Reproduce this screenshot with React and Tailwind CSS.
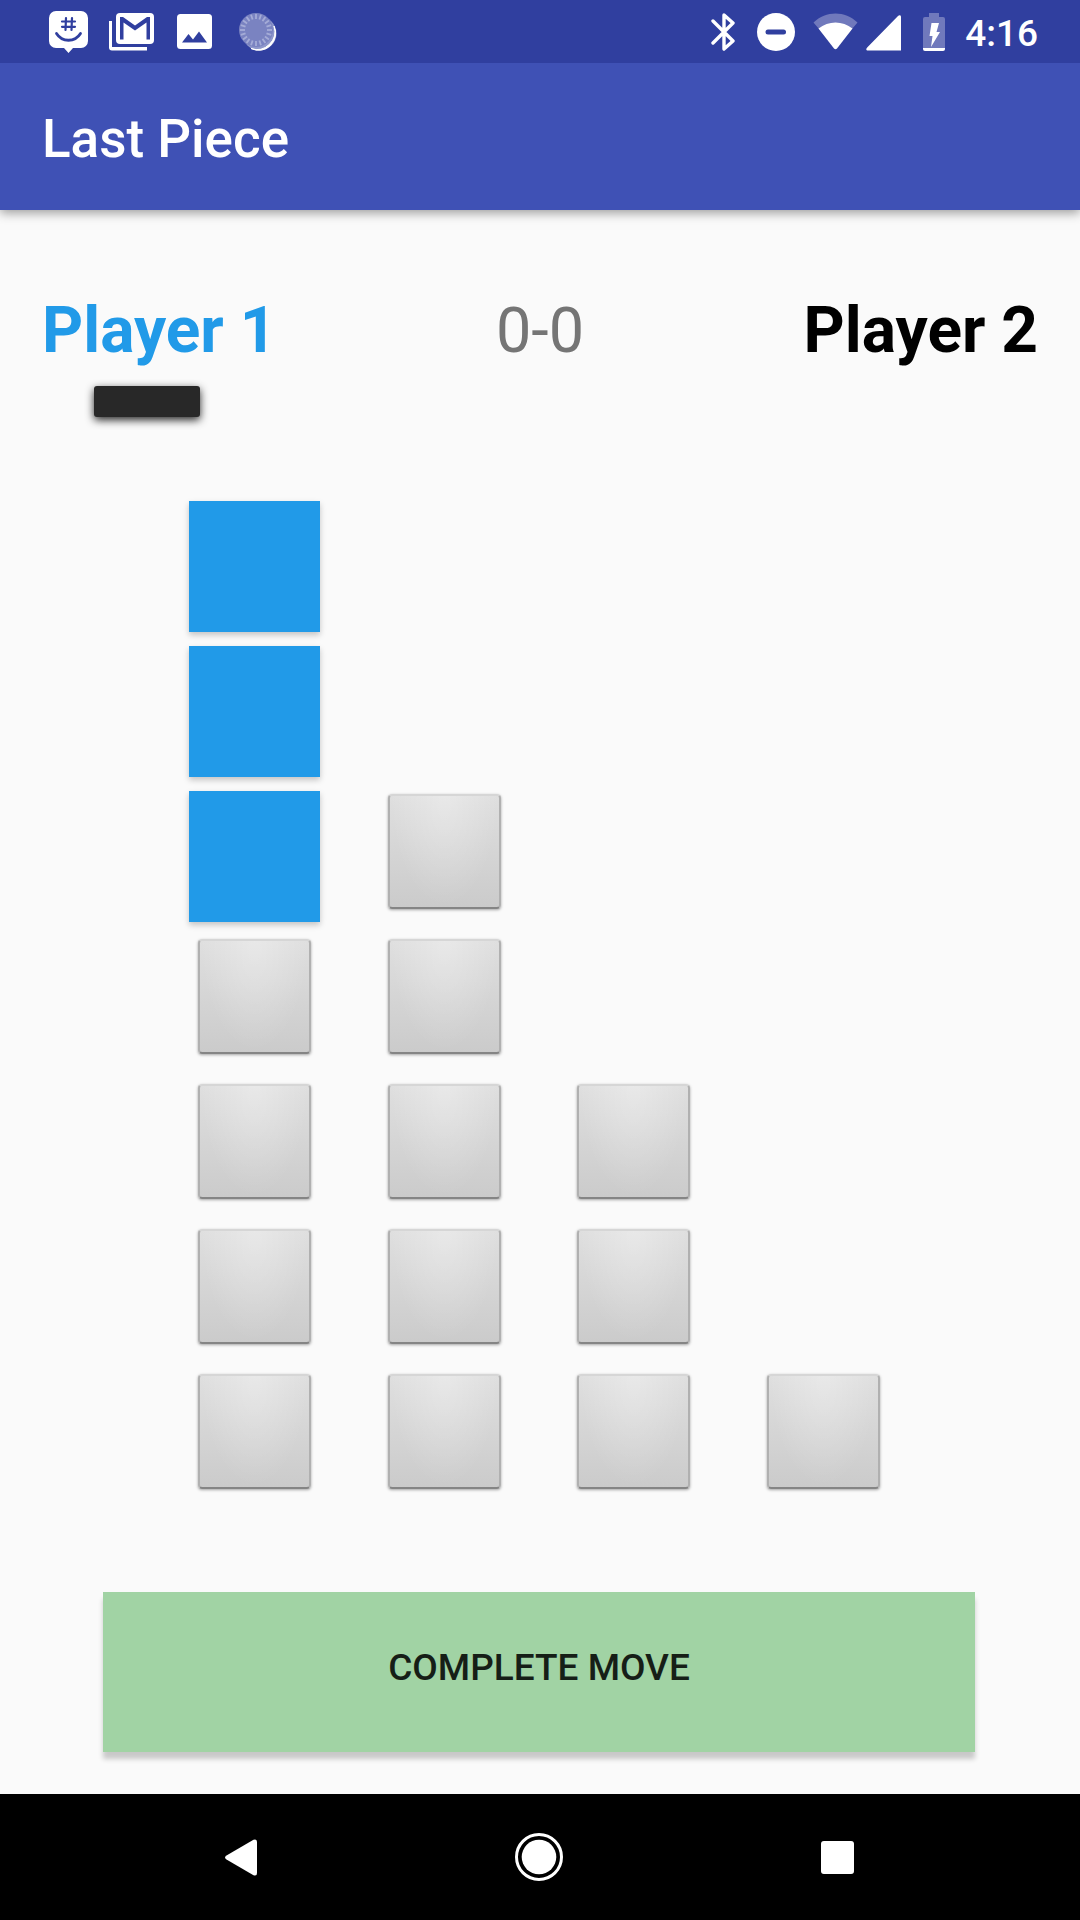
import React, { useState } from "react";

const ROWS = 7;
const COLUMN_HEIGHTS = [7, 5, 3, 1];

function GroupMeIcon() {
  return (
    <svg viewBox="0 0 39 42" className="h-[42px] w-[39px]" aria-hidden="true">
      <path fill="#fff" d="M7 0h25a7 7 0 0 1 7 7v23a7 7 0 0 1-7 7h-8l-4.500 5-4.500-5H7a7 7 0 0 1-7-7V7a7 7 0 0 1 7-7z" />
      <g fill="none" stroke="#303f9f" strokeLinecap="round">
        <path strokeWidth="2.200" d="M17 7l-.5 12M23 7l-.5 12M13 10.500h13M13 15.800h13" />
        <path strokeWidth="2.800" d="M7.500 22.500c5.500 9 18.500 9 24 0" />
      </g>
    </svg>
  );
}

function GmailIcon() {
  return (
    <svg viewBox="0 0 45 38" className="h-[38px] w-[45px]" aria-hidden="true">
      <path fill="#fff" d="M0 8h3v26h35v3.500H3a3 3 0 0 1-3-3z" />
      <rect x="7" y="0" width="38" height="31" rx="4" fill="#fff" />
      <path fill="#303f9f" d="M11 26.500V4h3l12 8.500L38 4h3v22.500h-3.500V9.500L26 17.500 14.500 9.500v17z" />
    </svg>
  );
}

function PictureIcon() {
  return (
    <svg viewBox="0 0 35 35" className="size-[35px]" aria-hidden="true">
      <rect width="35" height="35" rx="3.500" fill="#fff" />
      <path fill="#303f9f" d="M5 28.500 11.500 20l4.500 5.500L22 17.500l8 11z" />
    </svg>
  );
}

function SpinnerIcon() {
  const ticks = Array.from({ length: 20 }, (_, i) => i * 18);
  return (
    <svg viewBox="0 0 38 38" className="size-[38px]" aria-hidden="true">
      <circle cx="20.500" cy="20.500" r="17" fill="#8f98cb" />
      <path fill="#fff" stroke="#fff" d="M35 13a17 17 0 0 1-23 22.500 18 18 0 0 0 23-22.500z" />
      <circle cx="17" cy="17" r="17" fill="#7a83c1" />
      <g stroke="#a5acd7" strokeWidth="1.800">
        {ticks.map((a) => (
          <path key={a} d="M17 1v5" transform={`rotate(${a} 17 17)`} />
        ))}
      </g>
    </svg>
  );
}

function BluetoothIcon() {
  return (
    <svg viewBox="0 0 24 38" className="h-[38px] w-6" aria-hidden="true">
      <path fill="none" stroke="#fff" strokeWidth="3.400" strokeLinecap="round" strokeLinejoin="round" d="M2 8l20 20-9 8V2l9 8L2 30" />
    </svg>
  );
}

function DoNotDisturbIcon() {
  return (
    <svg viewBox="0 0 38 38" className="size-[38px]" aria-hidden="true">
      <circle cx="19" cy="19" r="19" fill="#fff" />
      <rect x="8.500" y="16.500" width="20.500" height="5" rx="2.500" fill="#303f9f" />
    </svg>
  );
}

function WifiIcon() {
  return (
    <svg viewBox="0 0 45 38" className="h-[38px] w-[45px]" aria-hidden="true">
      <path fill="#7079bc" d="M.5 9.500C13-2.500 32-2.500 44.500 9.500L39 16 22.500 36 6 16z" />
      <path fill="#fff" d="M5.500 15.500c10-8 24-8 34 0L24 35.500q-1.500 1.500-3 0z" />
    </svg>
  );
}

function SignalIcon() {
  return (
    <svg viewBox="0 0 35 38" className="h-[38px] w-[35px]" aria-hidden="true">
      <path fill="#fff" d="M1.200 34.500 32 3c1.500-1.300 3-.8 3 1v33.500H2C0 37.500-.3 36 1.200 34.500z" />
    </svg>
  );
}

function BatteryIcon() {
  return (
    <svg viewBox="0 0 22 38" className="h-[38px] w-[22px]" aria-hidden="true">
      <path fill="#7079bc" d="M6 0h10v4h4a2 2 0 0 1 2 2v29H0V6a2 2 0 0 1 2-2h4z" />
      <path fill="#fff" d="M0 35h22v1a2 2 0 0 1-2 2H2a2 2 0 0 1-2-2z" />
      <path fill="#fff" d="M8.500 10h7.500l-2.500 9h3.500L8 34l1.500-11H6.500z" />
    </svg>
  );
}

function StatusBar() {
  return (
    <div className="relative z-10 flex h-[63px] items-center justify-between bg-[#303f9f] pr-[42px] pl-[37px]">
      <div className="grid grid-cols-4">
        {[GroupMeIcon, GmailIcon, PictureIcon, SpinnerIcon].map((Icon, i) => (
          <span key={i} className="flex w-[63px] items-center justify-center">
            <Icon />
          </span>
        ))}
      </div>
      <div className="flex items-center">
        <BluetoothIcon />
        <span className="ml-[22px]"><DoNotDisturbIcon /></span>
        <span className="ml-[18px]"><WifiIcon /></span>
        <span className="ml-2"><SignalIcon /></span>
        <span className="ml-[22px]"><BatteryIcon /></span>
        <span className="ml-5 pt-1 text-[37px] leading-[44px] font-medium text-white">4:16</span>
      </div>
    </div>
  );
}

function Piece({ selected, label, onClick }) {
  return (
    <button
      type="button"
      aria-label={label}
      aria-pressed={selected}
      onClick={onClick}
      className={
        selected
          ? "size-[131px] bg-[#219ae8] shadow-[0_3px_6px_rgba(0,0,0,0.22)]"
          : "mt-[3px] h-[115px] w-[113px] rounded-[4px] border-2 border-t-[#d6d6d6] border-r-[#b0b0b0] border-b-[#858585] border-l-[#b0b0b0] bg-[radial-gradient(ellipse_at_50%_0%,rgba(255,255,255,0.3),rgba(255,255,255,0)_70%),linear-gradient(#dfdfdf,#cbcbcb)] shadow-[0_1px_3px_rgba(0,0,0,0.35)]"
      }
    />
  );
}

export default function App() {
  const [picked, setPicked] = useState(["0-0", "1-0", "2-0"]);
  const toggle = (id) =>
    setPicked((p) => (p.includes(id) ? p.filter((x) => x !== id) : [...p, id]));

  return (
    <div className="flex min-h-screen flex-col bg-[#fafafa] font-['Roboto',sans-serif]">
      <StatusBar />
      <header className="flex h-[147px] items-center bg-[#3f51b5] px-[42px] pt-1 shadow-[0_3px_10px_rgba(0,0,0,0.38)]">
        <h1 className="text-[53px] leading-[62px] font-medium text-white">Last Piece</h1>
      </header>

      <main className="flex flex-1 flex-col pt-[84px] pb-[42px]">
        <div className="grid grid-cols-[1fr_auto_1fr] px-[42px] text-[64px] leading-[74px]">
          <h2 className="font-bold text-[#219ae8]">Player 1</h2>
          <p className="text-[63px] text-[#757575]">0-0</p>
          <h2 className="text-right font-bold text-black">Player 2</h2>
        </div>
        <div className="mt-[18px] px-[94px]">
          <div className="h-[31px] w-[106px] rounded-[3px] bg-[#282828] shadow-[0_3px_8px_rgba(0,0,0,0.85)]" />
        </div>

        <div className="mt-[84px] grid auto-rows-[131px] grid-cols-4 gap-y-[14px] pr-[162px] pl-40">
          {Array.from({ length: ROWS }, (_, row) =>
            COLUMN_HEIGHTS.map((height, col) => {
              const id = `${row}-${col}`;
              return (
                <div key={id} className="flex items-start justify-center">
                  {row >= ROWS - height && (
                    <Piece
                      selected={picked.includes(id)}
                      label={`Row ${row + 1}, column ${col + 1}`}
                      onClick={() => toggle(id)}
                    />
                  )}
                </div>
              );
            })
          )}
        </div>

        <div className="mt-[90px] flex pr-[105px] pl-[103px]">
          <button
            type="button"
            className="h-40 flex-1 bg-[#a1d3a4] pb-2 text-[37px] leading-[44px] font-medium text-[#161e17] shadow-[0_7px_5px_rgba(0,0,0,0.2)]"
          >
            COMPLETE MOVE
          </button>
        </div>
      </main>

      <nav className="grid h-[126px] grid-cols-3 bg-black pr-[93px] pl-[92px]">
        <button type="button" aria-label="Back" className="flex items-center justify-center">
          <svg viewBox="0 0 32 37" className="h-[37px] w-8">
            <path fill="#fff" d="M1.500 16.500 28.500.8Q32-.5 32 3v31q0 3.500-3.500 2.200L1.500 20.500q-3-2 0-4z" />
          </svg>
        </button>
        <button type="button" aria-label="Home" className="flex items-center justify-center">
          <svg viewBox="0 0 48 48" className="size-12">
            <circle cx="24" cy="24" r="22.500" fill="none" stroke="#fff" strokeWidth="3" />
            <circle cx="24" cy="24" r="17.300" fill="#fff" />
          </svg>
        </button>
        <button type="button" aria-label="Recent apps" className="flex items-center justify-center">
          <svg viewBox="0 0 34 34" className="size-[33px]">
            <rect width="34" height="34" rx="3" fill="#fff" />
          </svg>
        </button>
      </nav>
    </div>
  );
}
